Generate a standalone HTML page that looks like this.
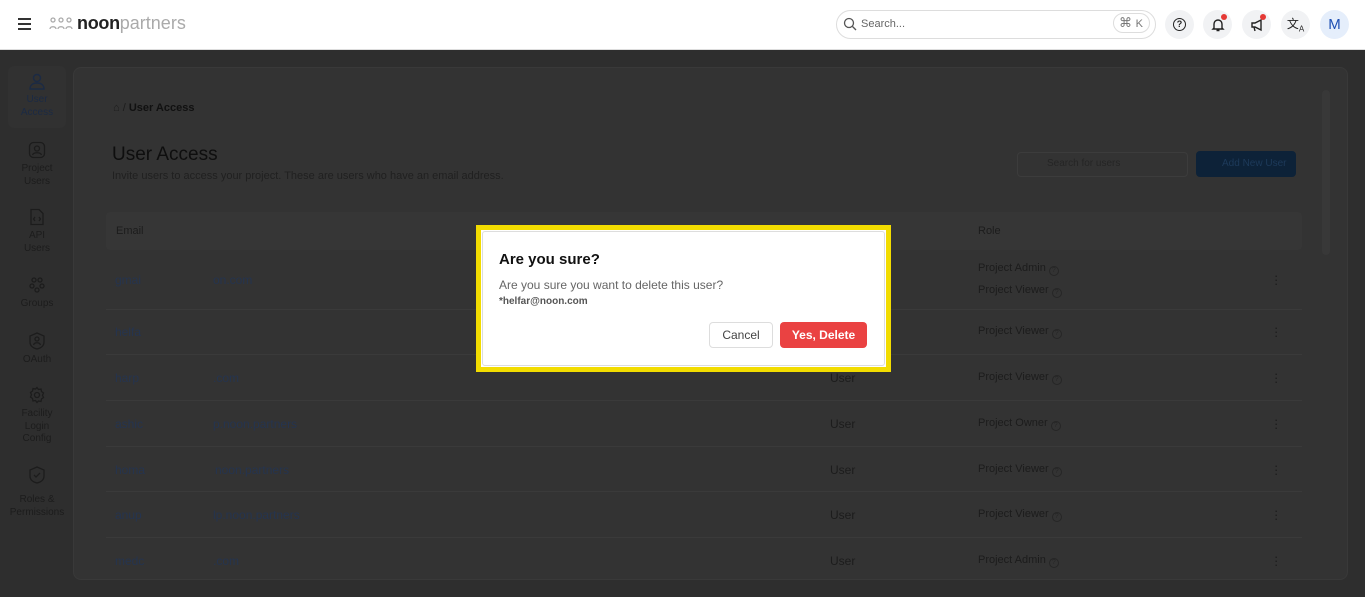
<!DOCTYPE html>
<html><head><meta charset="utf-8"><style>
*{box-sizing:border-box;margin:0;padding:0}
body{width:1365px;height:597px;overflow:hidden;background:#2e2e2e;font-family:"Liberation Sans",sans-serif;position:relative}
.hdr{position:absolute;left:0;top:0;width:1365px;height:50px;background:#fff;border-bottom:1px solid #ddd}
.abs{position:absolute}
.ib{position:absolute;top:10px;width:29px;height:29px;border-radius:50%;background:#f1f2f4}
.side{position:absolute;left:8px;top:66px;width:58px;color:#1c1c1c;font-size:10px;text-align:center;line-height:12.5px}
.side svg{display:block;margin:0 auto 4px}
.card{position:absolute;left:73px;top:67px;width:1275px;height:513px;background:#333;border-radius:8px;border:1px solid #393939}
.row{position:absolute;left:106px;width:1196px;border-top:1px solid #3a3a3a}
.t{position:absolute;font-size:12px;color:#1c1c1c}
.em{color:#25344f}
.q{display:inline-block;width:10px;height:10px;border:1px solid #262626;border-radius:50%;font-size:7px;line-height:8px;text-align:center;vertical-align:-1px;margin-left:3px;color:#262626}
.dots{position:absolute;left:1274px;width:3px;font-size:13px;color:#1a1a1a;line-height:4px}
</style></head><body>
<div class="hdr">
 <div class="abs" style="left:18px;top:18px;width:13px;height:2px;background:#333;box-shadow:0 5px 0 #333,0 10px 0 #333"></div>
 <svg class="abs" style="left:49px;top:16px" width="24" height="16" viewBox="0 0 24 16" fill="none" stroke="#aaa" stroke-width="1.3"><circle cx="4" cy="4" r="2"/><circle cx="12" cy="4" r="2"/><circle cx="20" cy="4" r="2"/><path d="M1 13c0-3 6-3 6 0M9 13c0-3 6-3 6 0M17 13c0-3 6-3 6 0"/></svg>
 <div class="abs" style="left:77px;top:13px;font-size:18px;font-weight:bold;color:#222;letter-spacing:-0.3px">noon<span style="font-weight:normal;color:#aaa;letter-spacing:0">partners</span></div>
 <div class="abs" style="left:836px;top:10px;width:320px;height:29px;border:1px solid #ddd;border-radius:15px"></div>
 <svg class="abs" style="left:843px;top:17px" width="14" height="14" viewBox="0 0 14 14" fill="none" stroke="#555" stroke-width="1.3"><circle cx="6" cy="6" r="4.5"/><path d="M9.5 9.5L13 13"/></svg>
 <div class="abs" style="left:861px;top:18px;font-size:11px;color:#666">Search...</div>
 <div class="abs" style="left:1113px;top:13px;width:37px;height:20px;border:1px solid #ddd;border-radius:10px;font-size:13px;color:#777;padding-left:5px;line-height:18px">⌘ <span style="font-size:11px">K</span></div>
 <div class="ib" style="left:1165px"><div class="abs" style="left:8px;top:8px;width:13px;height:13px;border:1.5px solid #222;border-radius:50%;font-size:9px;font-weight:bold;text-align:center;line-height:10px;color:#222">?</div></div>
 <div class="ib" style="left:1203px"><svg class="abs" style="left:8px;top:7px" width="14" height="15" viewBox="0 0 14 15" fill="none" stroke="#222" stroke-width="1.4"><path d="M3 11V7a4 4 0 018 0v4l1 1H2z M5.5 13.5h3"/></svg><div class="abs" style="left:18px;top:4px;width:6px;height:6px;border-radius:50%;background:#e53935"></div></div>
 <div class="ib" style="left:1242px"><svg class="abs" style="left:8px;top:8px" width="14" height="14" viewBox="0 0 14 14" fill="none" stroke="#222" stroke-width="1.4"><path d="M2 5h3l6-3v10L5 9H2z M4 9l1 4"/></svg><div class="abs" style="left:18px;top:4px;width:6px;height:6px;border-radius:50%;background:#e53935"></div></div>
 <div class="ib" style="left:1281px;font-size:12px;color:#222;text-align:center;line-height:29px;font-family:'Liberation Sans','Noto Sans CJK SC',sans-serif">文<sub style="font-size:8px">A</sub></div>
 <div class="ib" style="left:1320px;background:#e5eefb;color:#1e4fb3;font-size:15px;text-align:center;line-height:29px">M</div>
</div>

<div class="side">
 <div style="position:absolute;left:0;top:0;width:58px;height:62px;background:#313131;border-radius:6px"></div>
 <div style="position:absolute;top:6px;width:58px;color:#1b2a44"><svg width="18" height="18" viewBox="0 0 18 18" fill="none" stroke="#1b2a44" stroke-width="1.4"><circle cx="9" cy="6" r="3.5"/><path d="M2 17c0-4 3-6 7-6s7 2 7 6z"/></svg>User<br>Access</div>
 <div style="position:absolute;top:75px;width:58px"><svg width="18" height="18" viewBox="0 0 18 18" fill="none" stroke="#1c1c1c" stroke-width="1.3"><rect x="1.5" y="1.5" width="15" height="15" rx="4"/><circle cx="9" cy="7.5" r="2.5"/><path d="M4.5 14c1-3 8-3 9 0"/></svg>Project<br>Users</div>
 <div style="position:absolute;top:142px;width:58px"><svg width="18" height="18" viewBox="0 0 18 18" fill="none" stroke="#1c1c1c" stroke-width="1.3"><path d="M3 1.5h8l4 4v11H3z"/><path d="M7 9l-1.5 2L7 13M11 9l1.5 2L11 13"/></svg>API<br>Users</div>
 <div style="position:absolute;top:210px;width:58px"><svg width="18" height="18" viewBox="0 0 18 18" fill="none" stroke="#1c1c1c" stroke-width="1.3"><circle cx="6" cy="4" r="2"/><circle cx="12" cy="4" r="2"/><circle cx="4" cy="10" r="2"/><circle cx="14" cy="10" r="2"/><circle cx="9" cy="14" r="2"/></svg>Groups</div>
 <div style="position:absolute;top:266px;width:58px"><svg width="18" height="18" viewBox="0 0 18 18" fill="none" stroke="#1c1c1c" stroke-width="1.3"><path d="M9 1l7 3v6c0 4-3 6-7 7-4-1-7-3-7-7V4z"/><circle cx="9" cy="7" r="2"/><path d="M5.5 13c1-3 6-3 7 0"/></svg>OAuth</div>
 <div style="position:absolute;top:320px;width:58px"><svg width="18" height="18" viewBox="0 0 18 18" fill="none" stroke="#1c1c1c" stroke-width="1.3"><circle cx="9" cy="9" r="2.5"/><path d="M9 1.5l1.5 2 2.5-.5.5 2.5 2 1.5-1 2.3 1 2.2-2 1.5-.5 2.5-2.5-.5L9 16.5l-1.5-2-2.5.5-.5-2.5-2-1.5 1-2.2-1-2.3 2-1.5.5-2.5 2.5.5z"/></svg>Facility<br>Login<br>Config</div>
 <div style="position:absolute;top:400px;width:58px"><svg width="18" height="18" viewBox="0 0 18 18" fill="none" stroke="#1c1c1c" stroke-width="1.3"><path d="M9 1l7 3v6c0 4-3 6-7 7-4-1-7-3-7-7V4z"/><path d="M6 9l2 2 4-4"/></svg><div style="height:6px"></div>Roles &amp;<br>Permissions</div>
</div>

<div class="card"></div>
<div class="abs" style="left:1322px;top:90px;width:8px;height:165px;background:#383838;border-radius:4px"></div>
<div class="t" style="left:113px;top:102px;font-size:11px">⌂ / <b style="color:#111">User Access</b></div>
<div class="t" style="left:112px;top:144px;font-size:19px;color:#0e0e0e">User Access</div>
<div class="t" style="left:112px;top:170px;font-size:11px;color:#202020">Invite users to access your project. These are users who have an email address.</div>
<div class="abs" style="left:1017px;top:152px;width:171px;height:25px;border:1px solid #3c3c3c;border-radius:4px"></div>
<div class="t" style="left:1047px;top:158px;font-size:10px;color:#252525">Search for users</div>
<div class="abs" style="left:1196px;top:151px;width:100px;height:26px;background:#0d2238;border-radius:4px;font-size:10px;color:#1d3a5a;line-height:26px;padding-left:26px">Add New User</div>

<div class="abs" style="left:106px;top:212px;width:1196px;height:38px;background:#363636;border-radius:4px"></div>
<div class="t" style="left:116px;top:225px;font-size:11px">Email</div>
<div class="t" style="left:978px;top:225px;font-size:11px">Role</div>

<div class="t em" style="left:115px;top:273px">gmai</div><div class="t em" style="left:213px;top:273px">on.com</div>
<div class="t" style="left:978px;top:262px;font-size:11px">Project Admin<span class="q">?</span></div>
<div class="t" style="left:978px;top:284px;font-size:11px">Project Viewer<span class="q">?</span></div>
<div class="dots" style="top:274px">·<br>·<br>·</div>

<div class="row" style="top:309px"></div>
<div class="t em" style="left:115px;top:325px">helfa</div>
<div class="t" style="left:978px;top:325px;font-size:11px">Project Viewer<span class="q">?</span></div>
<div class="dots" style="top:326px">·<br>·<br>·</div>

<div class="row" style="top:354px"></div>
<div class="t em" style="left:115px;top:371px">harp</div><div class="t em" style="left:213px;top:371px">.com</div>
<div class="t" style="left:830px;top:371px">User</div>
<div class="t" style="left:978px;top:371px;font-size:11px">Project Viewer<span class="q">?</span></div>
<div class="dots" style="top:372px">·<br>·<br>·</div>

<div class="row" style="top:400px"></div>
<div class="t em" style="left:115px;top:417px">ashic</div><div class="t em" style="left:213px;top:417px">p.noon.partners</div>
<div class="t" style="left:830px;top:417px">User</div>
<div class="t" style="left:978px;top:417px;font-size:11px">Project Owner<span class="q">?</span></div>
<div class="dots" style="top:418px">·<br>·<br>·</div>

<div class="row" style="top:446px"></div>
<div class="t em" style="left:115px;top:463px">homa</div><div class="t em" style="left:215px;top:463px">noon.partners</div>
<div class="t" style="left:830px;top:463px">User</div>
<div class="t" style="left:978px;top:463px;font-size:11px">Project Viewer<span class="q">?</span></div>
<div class="dots" style="top:464px">·<br>·<br>·</div>

<div class="row" style="top:491px"></div>
<div class="t em" style="left:115px;top:508px">anup</div><div class="t em" style="left:213px;top:508px">lp.noon.partners</div>
<div class="t" style="left:830px;top:508px">User</div>
<div class="t" style="left:978px;top:508px;font-size:11px">Project Viewer<span class="q">?</span></div>
<div class="dots" style="top:509px">·<br>·<br>·</div>

<div class="row" style="top:537px"></div>
<div class="t em" style="left:115px;top:554px">medc</div><div class="t em" style="left:213px;top:554px">.com</div>
<div class="t" style="left:830px;top:554px">User</div>
<div class="t" style="left:978px;top:554px;font-size:11px">Project Admin<span class="q">?</span></div>
<div class="dots" style="top:555px">·<br>·<br>·</div>

<div class="abs" style="left:476px;top:225px;width:415px;height:147px;border:5px solid #f2dc00;background:#fff"></div>
<div class="abs" style="left:482px;top:231px;width:403px;height:135px;border:1px solid #ddd;border-radius:3px"></div>
<div class="abs" style="left:499px;top:251px;font-size:15px;font-weight:bold;color:#111">Are you sure?</div>
<div class="abs" style="left:499px;top:278px;font-size:12px;color:#666">Are you sure you want to delete this user?</div>
<div class="abs" style="left:499px;top:296px;font-size:10px;font-weight:bold;color:#555">*helfar@noon.com</div>
<div class="abs" style="left:709px;top:322px;width:64px;height:26px;border:1px solid #ddd;border-radius:4px;font-size:12px;color:#444;text-align:center;line-height:24px">Cancel</div>
<div class="abs" style="left:780px;top:322px;width:87px;height:26px;background:#ea4242;border-radius:4px;font-size:12px;font-weight:bold;color:#fff;text-align:center;line-height:26px">Yes, Delete</div>
</body></html>
